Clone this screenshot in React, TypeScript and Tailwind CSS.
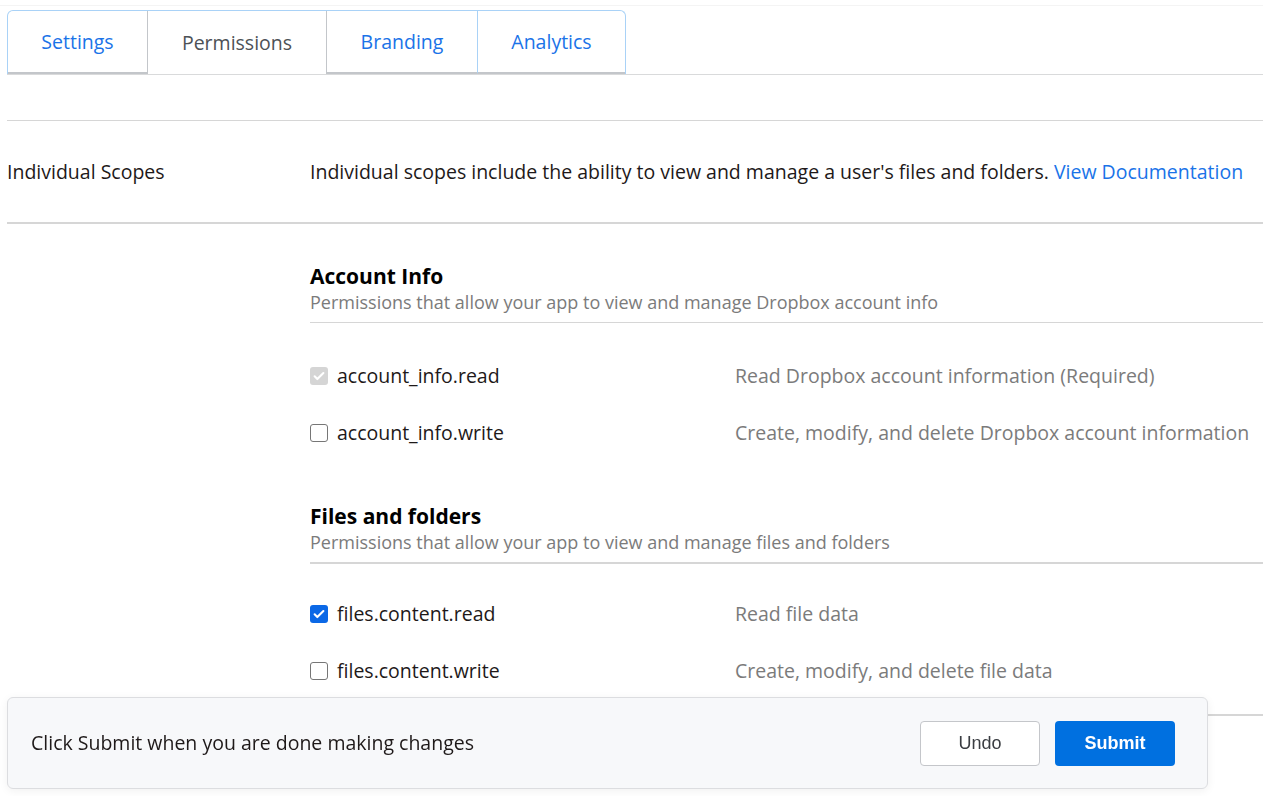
import React from "react"

const tabs = [
    { label: "Settings", w: "w-[139px]", active: false },
    { label: "Permissions", w: "w-[180px]", active: true },
    { label: "Branding", w: "w-[150px]", active: false },
    { label: "Analytics", w: "w-[148px]", active: false },
]

type Scope = { name: string; desc: string; state: "locked" | "on" | "off" }

const groups: { title: string; sub: string; thick?: boolean; scopes: Scope[] }[] = [
    {
        title: "Account Info",
        sub: "Permissions that allow your app to view and manage Dropbox account info",
        scopes: [
            { name: "account_info.read", desc: "Read Dropbox account information (Required)", state: "locked" },
            { name: "account_info.write", desc: "Create, modify, and delete Dropbox account information", state: "off" },
        ],
    },
    {
        title: "Files and folders",
        sub: "Permissions that allow your app to view and manage files and folders",
        thick: true,
        scopes: [
            { name: "files.content.read", desc: "Read file data", state: "on" },
            { name: "files.content.write", desc: "Create, modify, and delete file data", state: "off" },
        ],
    },
]

function Box({ state }: { state: Scope["state"] }) {
    if (state === "off") {
        return <span className="block h-[18px] w-[18px] shrink-0 rounded-[3px] border border-[#767676] bg-white" />
    }
    return (
        <span
            className={`flex h-[18px] w-[18px] shrink-0 items-center justify-center rounded-[3px] ${
                state === "on" ? "bg-[#0b68e6]" : "bg-[#d5d5d5]"
            }`}
        >
            <svg viewBox="0 0 16 16" className="h-[14px] w-[14px]" fill="none">
                <path d="M3 8.4l3.1 3.1L13 4.6" stroke="white" strokeWidth="2.4" strokeLinecap="round" strokeLinejoin="round" />
            </svg>
        </span>
    )
}

export default function App() {
    return (
        <div className="min-h-[796px] bg-white pl-[7px] font-['Open_Sans',sans-serif] text-[#1e1919]">
            <div className="-ml-[7px] h-[6px] border-b border-[#f4f4f4]" />

            {/* Tabs */}
            <div className="mt-[4px] flex border-b border-[#d9dadb]">
                <div className="flex overflow-hidden rounded-t-[6px] border-x border-t border-[#a9d2f7]">
                    {tabs.map((t, i) => (
                        <div
                            key={t.label}
                            className={`flex h-[63px] ${t.w} items-center justify-center text-[19.5px] ${
                                t.active
                                    ? "border-x border-[#c3c6ca] text-[#4d5156]"
                                    : "border-b-2 border-[#c3c6ca] text-[#1a73e8]"
                            } ${i === 3 ? "border-l border-l-[#a9d2f7]" : ""}`}
                        >
                            {t.label}
                        </div>
                    ))}
                </div>
            </div>

            <div className="mt-[45px] border-t border-[#d6d6d6]" />

            <div className="flex h-[103px] items-center border-b-2 border-[#d6d6d6] pt-[1px] text-[19.5px]">
                <div className="w-[303px] shrink-0">Individual Scopes</div>
                <div>
                    Individual scopes include the ability to view and manage a user's files and folders.{" "}
                    <span className="text-[#1a73e8]">View Documentation</span>
                </div>
            </div>

            <div className="pl-[303px]">
                {groups.map((g, gi) => (
                    <div key={g.title} className={gi === 0 ? "pt-[38px]" : "pt-[41px]"}>
                        <div className="text-[21px] font-bold leading-[28px] text-black">{g.title}</div>
                        <div className="pb-[8px] text-[18px] leading-[24px] text-[#7b7b7b]">{g.sub}</div>
                        <div className={g.thick ? "border-t-2 border-[#d6d6d6]" : "border-t border-[#d6d6d6]"} />
                        <div className={gi === 0 ? "pt-[24px]" : "pt-[21px]"}>
                            {g.scopes.map((s) => (
                                <div key={s.name} className="flex h-[57px] items-center text-[19.5px]">
                                    <div className="flex w-[425px] shrink-0 items-center gap-[9px]">
                                        <Box state={s.state} />
                                        <span>{s.name}</span>
                                    </div>
                                    <span className="text-[#7b7b7b]">{s.desc}</span>
                                </div>
                            ))}
                        </div>
                    </div>
                ))}
                <div className="mt-[15px] border-t-2 border-[#d6d6d6]" />
            </div>

            {/* Sticky submit bar */}
            <div className="fixed left-[7px] top-[697px] flex h-[92px] w-[1201px] items-center justify-between rounded-[6px] border border-[#dcdde0] bg-[#f7f8fa] pl-[23px] pr-[32px] shadow-[0_2px_10px_rgba(0,0,0,0.06)]">
                <span className="text-[19.5px]">Click Submit when you are done making changes</span>
                <div className="flex gap-[15px] font-['Liberation_Sans',Arial,sans-serif] text-[18px]">
                    <button className="h-[45px] w-[120px] rounded-[4px] border border-[#c4c6ca] bg-white text-[#3a3d42]">
                        Undo
                    </button>
                    <button className="h-[45px] w-[120px] rounded-[4px] bg-[#0070e0] font-bold text-white">
                        Submit
                    </button>
                </div>
            </div>
        </div>
    )
}
